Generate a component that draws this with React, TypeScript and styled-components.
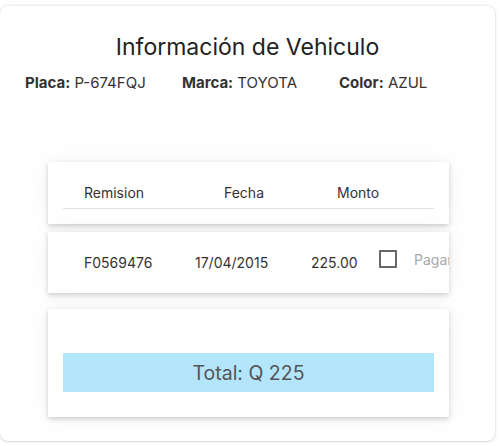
import styled, { createGlobalStyle } from "styled-components";

const GlobalStyle = createGlobalStyle`
  html, body {
    margin: 0;
    padding: 0;
    background: #ffffff;
  }
  body {
    font-family: Inter, "Liberation Sans", sans-serif;
    color: #333333;
  }
`;

const Page = styled.div`
  width: 500px;
  height: 446px;
  box-sizing: border-box;
  padding: 6px 5px 5px 0;
`;

const Sheet = styled.div`
  box-sizing: border-box;
  height: 100%;
  background: #ffffff;
  border-radius: 8px;
  box-shadow: 0 0 3px rgba(0, 0, 0, 0.18), 0 1px 2px rgba(0, 0, 0, 0.08);
  padding: 26px 0 0;
  display: flex;
  flex-direction: column;
`;

const Title = styled.h1`
  margin: 0;
  font-size: 23px;
  font-weight: 400;
  text-align: center;
  color: #222222;
  line-height: 30px;
`;

const InfoRow = styled.div`
  display: grid;
  grid-template-columns: 157px 157px 1fr;
  padding: 11px 0 0 25px;
  font-size: 15px;
  line-height: 20px;
  color: #333333;
`;

const Label = styled.b`
  font-weight: 700;
`;

const Cards = styled.div`
  margin: 69px 0 0 48px;
  width: 401px;
  display: flex;
  flex-direction: column;
  gap: 8px;
`;

const Card = styled.div<{ $h: number; $gapTop?: number }>`
  box-sizing: border-box;
  height: ${(p) => p.$h}px;
  margin-top: ${(p) => p.$gapTop ?? 0}px;
  background: #ffffff;
  overflow: hidden;
  box-shadow: 0 2px 5px rgba(0, 0, 0, 0.18), 0 0 24px rgba(0, 0, 0, 0.05);
  padding: 0 15px;
`;

const HeadRow = styled.div`
  display: grid;
  grid-template-columns: 140px 113px 1fr;
  height: 47px;
  align-items: end;
  padding-bottom: 7px;
  box-sizing: border-box;
  border-bottom: 1px solid #e2e2e2;
  font-size: 14px;
  color: #333333;
`;

const DataRow = styled.div`
  display: grid;
  grid-template-columns: 111px 116px 68px auto;
  height: 61px;
  align-items: center;
  font-size: 14px;
  color: #333333;
  white-space: nowrap;
`;

const Cell = styled.div<{ $pad?: number }>`
  padding-left: ${(p) => p.$pad ?? 21}px;
`;

const PayToggle = styled.label`
  display: flex;
  align-items: center;
  gap: 17px;
  padding-left: 21px;
  margin-top: -7px;
`;

const Box = styled.span`
  display: block;
  flex: none;
  width: 14px;
  height: 14px;
  border: 2px solid #666666;
  border-radius: 1px;
`;

const Pagar = styled.span`
  color: #a8a8a8;
  font-size: 14px;
`;

const TotalBar = styled.div`
  margin-top: 44px;
  height: 39px;
  background: #b3e5fc;
  display: flex;
  align-items: center;
  justify-content: center;
  font-size: 19.5px;
  color: #555555;
`;

export default function App() {
  return (
    <>
      <GlobalStyle />
      <Page>
        <Sheet>
          <Title>Información de Vehiculo</Title>
          <InfoRow>
            <span>
              <Label>Placa:</Label> P-674FQJ
            </span>
            <span>
              <Label>Marca:</Label> TOYOTA
            </span>
            <span>
              <Label>Color:</Label> AZUL
            </span>
          </InfoRow>
          <Cards>
            <Card $h={62}>
              <HeadRow>
                <Cell>Remision</Cell>
                <Cell>Fecha</Cell>
                <Cell>Monto</Cell>
              </HeadRow>
            </Card>
            <Card $h={61}>
              <DataRow>
                <Cell>F0569476</Cell>
                <Cell>17/04/2015</Cell>
                <Cell>225.00</Cell>
                <PayToggle>
                  <Box />
                  <Pagar>Pagar</Pagar>
                </PayToggle>
              </DataRow>
            </Card>
            <Card $h={108} $gapTop={8}>
              <TotalBar>Total: Q 225</TotalBar>
            </Card>
          </Cards>
        </Sheet>
      </Page>
    </>
  );
}
